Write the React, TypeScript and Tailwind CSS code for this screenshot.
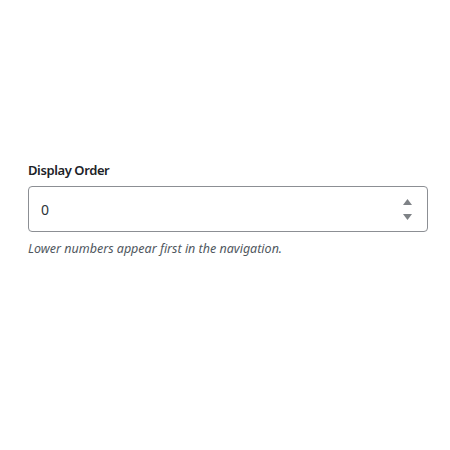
const App = () => {
  return (
    <div className="w-[450px] h-[450px] bg-white pt-[160px] px-[28px] font-['Noto_Sans',sans-serif]">
      <label className="block text-[13px] font-semibold tracking-[-0.4px] text-[#1d2327] leading-[20px] mb-[6px]">
        Display Order
      </label>
      <div className="flex items-center h-[46px] w-[400px] border border-[#8c8f94] rounded-[4px] pl-[12px] pr-[15px]">
        <span className="flex-1 text-[14px] text-[#2c3338]">0</span>
        <div className="flex flex-col items-center gap-[9px]">
          <svg width="9" height="6" viewBox="0 0 9 6">
            <path d="M4.5 0 L9 6 L0 6 Z" fill="#7e8286" />
          </svg>
          <svg width="9" height="6" viewBox="0 0 9 6">
            <path d="M0 0 L9 0 L4.5 6 Z" fill="#7e8286" />
          </svg>
        </div>
      </div>
      <p className="mt-[8px] text-[12.5px] italic text-[#50575e] leading-[18px]">
        Lower numbers appear first in the navigation.
      </p>
    </div>
  );
};

export default App;
